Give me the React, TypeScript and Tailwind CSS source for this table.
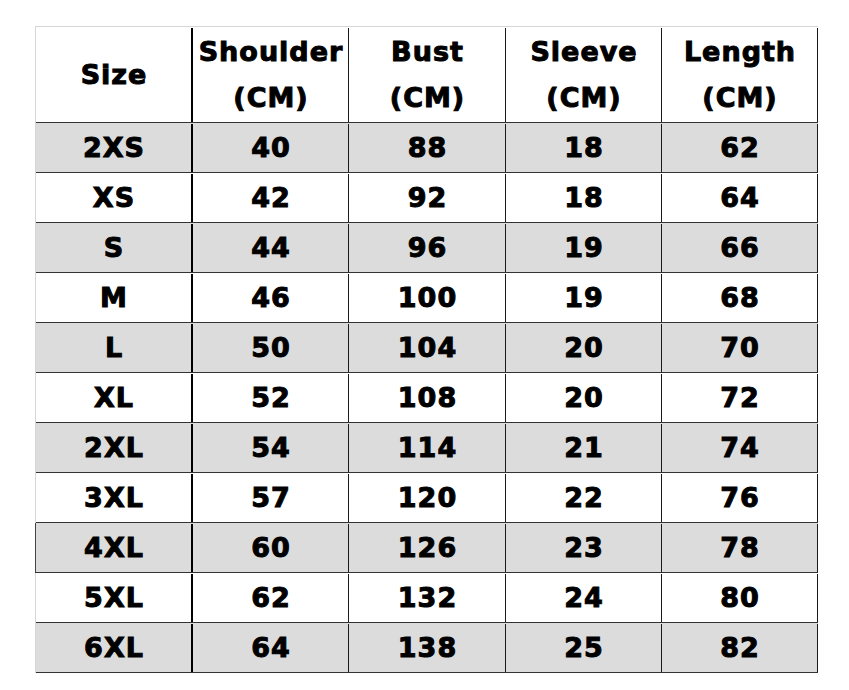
const rows = [
  ["2XS", "40", "88", "18", "62"],
  ["XS", "42", "92", "18", "64"],
  ["S", "44", "96", "19", "66"],
  ["M", "46", "100", "19", "68"],
  ["L", "50", "104", "20", "70"],
  ["XL", "52", "108", "20", "72"],
  ["2XL", "54", "114", "21", "74"],
  ["3XL", "57", "120", "22", "76"],
  ["4XL", "60", "126", "23", "78"],
  ["5XL", "62", "132", "24", "80"],
  ["6XL", "64", "138", "25", "82"],
];

const widths = ["w-[157px]", "w-[156px]", "w-[157px]", "w-[156px]", "w-[156px]"];

function Cell({ i, children }: { i: number; children: React.ReactNode }) {
  const border =
    i === 0 ? "border-r-2 border-black" : "border-r border-[#1a1a1a]";
  return (
    <div className={`${widths[i]} ${border} flex h-full shrink-0 flex-col items-center justify-center pl-px`}>
      {children}
    </div>
  );
}

export default function App() {
  const headers = [["Size"], ["Shoulder", "(CM)"], ["Bust", "(CM)"], ["Sleeve", "(CM)"], ["Length", "(CM)"]];
  return (
    <div
      className="h-[690px] w-[849px] bg-white pl-[35px] pt-[26px] tracking-[1px] text-black [-webkit-text-stroke:1px_black]"
      style={{ fontFamily: "'DejaVu Sans', 'Liberation Sans', Arial, sans-serif" }}
    >
      <div className="w-[783px] border-l border-t border-[#d6d6d6]">
        {/* Header */}
        <div className="flex h-[96px] border-b border-[#333] pt-px text-[27px] font-bold leading-[46px]">
          {headers.map((h, i) => (
            <Cell key={i} i={i}>
              {h.map((line) => (
                <span key={line}>{line}</span>
              ))}
            </Cell>
          ))}
        </div>

        {/* Rows */}
        {rows.map((r, ri) => (
          <div
            key={r[0]}
            className={`flex h-[50px] border-b border-[#333] pt-px text-[27px] font-bold ${
              ri % 2 === 0 ? "bg-[#dcdcdc]" : "bg-white"
            } ${r[0] === "4XL" ? "-ml-px border-l border-l-[#444]" : ""}`}
          >
            {r.map((v, i) => (
              <Cell key={i} i={i}>
                {v}
              </Cell>
            ))}
          </div>
        ))}
      </div>
    </div>
  );
}
